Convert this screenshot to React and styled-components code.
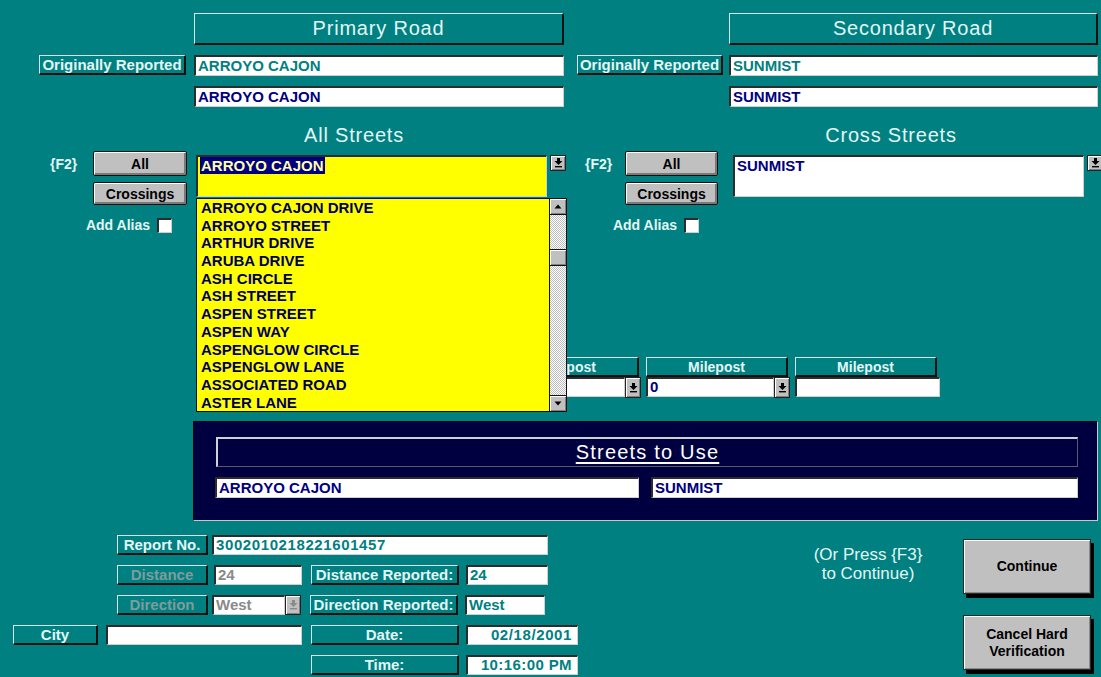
import React from "react";
import styled, { createGlobalStyle, css } from "styled-components";

const TEAL = "#008080";
const INK = "#e2f6f6";

const GlobalStyle = createGlobalStyle`
  html, body {
    margin: 0;
    padding: 0;
    background: ${TEAL};
  }
  body {
    font-family: "Liberation Sans", Arial, sans-serif;
  }
  * {
    box-sizing: border-box;
  }
`;

const raised = css`
  border-style: solid;
  border-width: 1px 2px 2px 1px;
  border-color: #d4e4e4 #101010 #101010 #d4e4e4;
`;

const sunken = css`
  border-style: solid;
  border-width: 2px 1px 1px 2px;
  border-color: #2c2c2c #cfcfcf #cfcfcf #2c2c2c;
`;

const Screen = styled.div`
  position: relative;
  width: 1101px;
  height: 677px;
  padding-top: 13px;
  overflow: hidden;
  background: ${TEAL};
  color: ${INK};
`;

/* ---------- road headers ---------- */

const RoadRow = styled.div`
  display: flex;
`;

const RoadPanel = styled.div`
  display: grid;
  grid-template-columns: ${({ $labelW }) => $labelW}px ${({ $fieldW }) => $fieldW}px;
  grid-template-rows: 32px 21px 21px;
  column-gap: ${({ $gap }) => $gap}px;
  row-gap: 10px;
  margin-left: ${({ $offset }) => $offset}px;
`;

const RoadTitle = styled.div`
  grid-column: 2;
  ${raised};
  display: flex;
  align-items: center;
  justify-content: center;
  font-size: 20px;
  letter-spacing: 0.8px;
  color: ${INK};
`;

const Tag = styled.div`
  ${raised};
  flex: none;
  width: ${({ $w }) => ($w ? `${$w}px` : "auto")};
  height: 20px;
  margin-left: ${({ $ml }) => $ml || 0}px;
  display: flex;
  align-items: center;
  justify-content: center;
  font-size: ${({ $size }) => $size || 15}px;
  font-weight: bold;
  white-space: nowrap;
  color: ${({ $muted }) => ($muted ? "#7f9c9c" : INK)};
`;

const Field = styled.div`
  ${sunken};
  flex: none;
  width: ${({ $w }) => ($w ? `${$w}px` : "auto")};
  height: ${({ $h }) => $h || 21}px;
  margin-left: ${({ $ml }) => $ml || 0}px;
  padding: 0 ${({ $pad }) => $pad ?? 2}px;
  background: #fff;
  font-size: 15px;
  font-weight: bold;
  line-height: ${({ $h }) => ($h || 21) - 4}px;
  letter-spacing: ${({ $track }) => $track || 0}px;
  text-align: ${({ $align }) => $align || "left"};
  white-space: nowrap;
  overflow: hidden;
  color: ${({ $color }) => $color || "#000080"};
`;

/* ---------- street pickers ---------- */

const Middle = styled.section`
  position: relative;
  margin-top: 16px;
`;

const PickerRow = styled.div`
  display: flex;
  height: 110px;
`;

const Picker = styled.div`
  display: flex;
  margin-left: ${({ $offset }) => $offset}px;
`;

const Controls = styled.div`
  width: ${({ $w }) => $w}px;
  margin-top: 28px;
  display: flex;
  flex-direction: column;
  align-items: flex-end;
`;

const KeyRow = styled.div`
  width: 100%;
  display: flex;
  align-items: center;
  justify-content: space-between;
`;

const KeyHint = styled.span`
  font-size: 14px;
  font-weight: bold;
  color: ${INK};
`;

const GreyButton = styled.button`
  width: ${({ $w }) => $w}px;
  height: 25px;
  margin-top: ${({ $mt }) => $mt || 0}px;
  padding: 0;
  border: 1px solid #111;
  border-radius: 2px;
  background: #c0c0c0;
  box-shadow: inset 1px 1px #fff, inset -2px -2px #7a7a7a;
  font-family: inherit;
  font-size: 14px;
  font-weight: bold;
  color: #000;
`;

const AliasRow = styled.label`
  display: flex;
  align-items: center;
  gap: 7px;
  margin-top: 12px;
  margin-right: ${({ $mr }) => $mr}px;
  font-size: 14px;
  font-weight: bold;
  color: ${INK};
`;

const Check = styled.span`
  ${sunken};
  width: 15px;
  height: 15px;
  background: #fff;
`;

const ComboCol = styled.div`
  width: 370px;
  flex: none;
  margin-left: ${({ $ml }) => $ml}px;
`;

const PickerTitle = styled.div`
  width: 316px;
  height: 24px;
  font-size: 20px;
  line-height: 24px;
  letter-spacing: 0.8px;
  text-align: center;
  color: ${INK};
`;

const ComboRow = styled.div`
  display: flex;
  align-items: flex-start;
  gap: 3px;
  margin-top: 8px;
`;

const ComboBox = styled.div`
  ${sunken};
  width: 352px;
  height: 42px;
  padding: 1px 2px;
  background: ${({ $bg }) => $bg};
  font-size: 15px;
  font-weight: bold;
  line-height: 16px;
  color: #000080;
`;

const Selected = styled.span`
  background: #000080;
  color: #ffffa8;
  padding: 0 1px;
`;

const DropBtn = styled.span`
  flex: none;
  width: 16px;
  height: ${({ $h }) => $h || 16}px;
  display: flex;
  align-items: center;
  justify-content: center;
  border: 1px solid #222;
  background: #c0c0c0;
  box-shadow: inset 1px 1px #fff, inset -1px -1px #808080;
`;

const DropList = styled.div`
  position: absolute;
  z-index: 2;
  left: 196px;
  top: 75px;
  width: 371px;
  height: 214px;
  display: flex;
  border: 1px solid #111;
  background: #ffff00;
`;

const ListItems = styled.ul`
  flex: 1;
  margin: 0;
  padding: 0 0 0 4px;
  list-style: none;
`;

const ListItem = styled.li`
  height: 17.7px;
  font-size: 15px;
  font-weight: bold;
  line-height: 18px;
  color: #00005a;
  white-space: nowrap;
`;

const ScrollBar = styled.div`
  width: 17px;
  display: flex;
  flex-direction: column;
  border-left: 1px solid #111;
`;

const ScrollArrow = styled.span`
  height: 16px;
  display: flex;
  align-items: center;
  justify-content: center;
  background: #c0c0c0;
  box-shadow: inset 1px 1px #fff, inset -1px -1px #808080;
  border-${({ $edge }) => $edge}: 1px solid #111;
`;

const ScrollTrack = styled.div`
  flex: 1;
  display: flex;
  flex-direction: column;
  background-color: #fff;
  background-image: repeating-conic-gradient(#bdbdbd 0 25%, #fff 0 50%);
  background-size: 2px 2px;
`;

const ScrollThumb = styled.span`
  height: 17px;
  margin-top: 34px;
  border-top: 1px solid #111;
  border-bottom: 1px solid #111;
  background: #c0c0c0;
  box-shadow: inset 1px 1px #fff, inset -1px -1px #808080;
`;

/* ---------- milepost row ---------- */

const MileRow = styled.div`
  display: flex;
  gap: 3px;
  margin-top: 124px;
  margin-left: 497px;
`;

const MileGroup = styled.div`
  width: 146px;
  display: flex;
  flex-direction: column;
`;

const MileInputs = styled.div`
  display: flex;
`;

/* ---------- streets to use ---------- */

const UsePanel = styled.section`
  width: 905px;
  height: 100px;
  margin: 23px 0 0 193px;
  padding: 15px 19px 0 22px;
  background: #000040;
  border-style: solid;
  border-width: 1px;
  border-color: #000 #c8c8c8 #c8c8c8 #000;
`;

const UseHeader = styled.div`
  height: 30px;
  display: flex;
  align-items: center;
  justify-content: center;
  border-style: solid;
  border-width: 2px 1px 1px 2px;
  border-color: #d0d0d0 #5a5a6a #5a5a6a #d0d0d0;
  font-size: 20px;
  letter-spacing: 1.2px;
  text-decoration: underline;
  text-underline-offset: 3px;
  color: #fff;
`;

const UseFields = styled.div`
  display: flex;
  gap: 12px;
  margin: 10px 0 0 -1px;
`;

/* ---------- bottom form ---------- */

const Bottom = styled.section`
  display: flex;
  margin-top: 14px;
`;

const Form = styled.div`
  width: 578px;
  display: flex;
  flex-direction: column;
  gap: 10px;
`;

const FormRow = styled.div`
  height: 20px;
  display: flex;
  align-items: center;
  padding-left: ${({ $pl }) => $pl}px;
`;

const Note = styled.p`
  width: 160px;
  margin: 10px 0 0 210px;
  font-size: 17px;
  line-height: 19px;
  text-align: center;
  color: ${INK};
`;

const Actions = styled.div`
  display: flex;
  flex-direction: column;
  gap: 21px;
  margin: 4px 0 0 15px;
`;

const BigButton = styled.button`
  width: 128px;
  height: 55px;
  padding: 0;
  border: 1px solid #2a2a2a;
  background: #c0c0c0;
  box-shadow: inset 1px 1px #fff, inset -1px -1px #8a8a8a, 3px 4px 0 #000;
  font-family: inherit;
  font-size: 14px;
  font-weight: bold;
  line-height: 17px;
  color: #000;
`;

/* ---------- glyphs ---------- */

const DownBar = ({ color = "#000" }) => (
  <svg width="9" height="10" viewBox="0 0 9 10">
    <path d="M3 0h3v3h2.5L4.5 7 0.5 3H3z" fill={color} />
    <rect x="1" y="8" width="7" height="1.4" fill={color} />
  </svg>
);

const Arrow = ({ up }) => (
  <svg width="8" height="5" viewBox="0 0 8 5">
    <path d={up ? "M4 0.5L7.5 4.5H0.5z" : "M0.5 0.5H7.5L4 4.5z"} fill="#000" />
  </svg>
);

const streets = [
  "ARROYO CAJON DRIVE",
  "ARROYO STREET",
  "ARTHUR DRIVE",
  "ARUBA DRIVE",
  "ASH CIRCLE",
  "ASH STREET",
  "ASPEN STREET",
  "ASPEN WAY",
  "ASPENGLOW CIRCLE",
  "ASPENGLOW LANE",
  "ASSOCIATED ROAD",
  "ASTER LANE",
];

export default function App() {
  return (
    <Screen>
      <GlobalStyle />

      <RoadRow>
        <RoadPanel $offset={39} $labelW={147} $fieldW={370} $gap={8}>
          <RoadTitle>Primary Road</RoadTitle>
          <Tag>Originally Reported</Tag>
          <Field $color={TEAL}>ARROYO CAJON</Field>
          <span />
          <Field>ARROYO CAJON</Field>
        </RoadPanel>
        <RoadPanel $offset={13} $labelW={146} $fieldW={369} $gap={6}>
          <RoadTitle>Secondary Road</RoadTitle>
          <Tag>Originally Reported</Tag>
          <Field $color={TEAL}>SUNMIST</Field>
          <span />
          <Field>SUNMIST</Field>
        </RoadPanel>
      </RoadRow>

      <Middle>
        <PickerRow>
          <Picker $offset={50}>
            <Controls $w={137}>
              <KeyRow>
                <KeyHint>{"{F2}"}</KeyHint>
                <GreyButton $w={94}>All</GreyButton>
              </KeyRow>
              <GreyButton $w={94} $mt={6}>Crossings</GreyButton>
              <AliasRow $mr={15}>
                Add Alias <Check />
              </AliasRow>
            </Controls>
            <ComboCol $ml={9}>
              <PickerTitle>All Streets</PickerTitle>
              <ComboRow>
                <ComboBox $bg="#ffff00">
                  <Selected>ARROYO CAJON</Selected>
                </ComboBox>
                <DropBtn>
                  <DownBar />
                </DropBtn>
              </ComboRow>
            </ComboCol>
          </Picker>

          <Picker $offset={19}>
            <Controls $w={133}>
              <KeyRow>
                <KeyHint>{"{F2}"}</KeyHint>
                <GreyButton $w={93}>All</GreyButton>
              </KeyRow>
              <GreyButton $w={93} $mt={6}>Crossings</GreyButton>
              <AliasRow $mr={19}>
                Add Alias <Check />
              </AliasRow>
            </Controls>
            <ComboCol $ml={15}>
              <PickerTitle>Cross Streets</PickerTitle>
              <ComboRow>
                <ComboBox $bg="#fff">SUNMIST</ComboBox>
                <DropBtn>
                  <DownBar />
                </DropBtn>
              </ComboRow>
            </ComboCol>
          </Picker>
        </PickerRow>

        <DropList>
          <ListItems>
            {streets.map((name) => (
              <ListItem key={name}>{name}</ListItem>
            ))}
          </ListItems>
          <ScrollBar>
            <ScrollArrow $edge="bottom">
              <Arrow up />
            </ScrollArrow>
            <ScrollTrack>
              <ScrollThumb />
            </ScrollTrack>
            <ScrollArrow $edge="top">
              <Arrow />
            </ScrollArrow>
          </ScrollBar>
        </DropList>

        <MileRow>
          <MileGroup>
            <Tag $w={142} $size={14}>Milepost</Tag>
            <MileInputs>
              <Field $w={128} $h={20} />
              <DropBtn $h={21}>
                <DownBar />
              </DropBtn>
            </MileInputs>
          </MileGroup>
          <MileGroup>
            <Tag $w={142} $size={14}>Milepost</Tag>
            <MileInputs>
              <Field $w={128} $h={20}>0</Field>
              <DropBtn $h={21}>
                <DownBar />
              </DropBtn>
            </MileInputs>
          </MileGroup>
          <MileGroup>
            <Tag $w={142} $size={14}>Milepost</Tag>
            <MileInputs>
              <Field $w={145} $h={20} />
            </MileInputs>
          </MileGroup>
        </MileRow>
      </Middle>

      <UsePanel>
        <UseHeader>Streets to Use</UseHeader>
        <UseFields>
          <Field $w={424}>ARROYO CAJON</Field>
          <Field $w={427}>SUNMIST</Field>
        </UseFields>
      </UsePanel>

      <Bottom>
        <Form>
          <FormRow $pl={117}>
            <Tag $w={91}>Report No.</Tag>
            <Field $w={336} $h={20} $ml={4} $color={TEAL} $track={0.6}>
              3002010218221601457
            </Field>
          </FormRow>
          <FormRow $pl={117}>
            <Tag $w={91} $muted>
              Distance
            </Tag>
            <Field $w={88} $h={20} $ml={6} $color="#8a8a8a">
              24
            </Field>
            <Tag $w={148} $ml={9}>
              Distance Reported:
            </Tag>
            <Field $w={82} $h={20} $ml={7} $color={TEAL}>
              24
            </Field>
          </FormRow>
          <FormRow $pl={117}>
            <Tag $w={91} $muted>
              Direction
            </Tag>
            <Field $w={73} $h={20} $ml={4} $color="#8a8a8a">
              West
            </Field>
            <DropBtn $h={20}>
              <DownBar color="#8a8a8a" />
            </DropBtn>
            <Tag $w={148} $ml={9}>
              Direction Reported:
            </Tag>
            <Field $w={80} $h={20} $ml={7} $color={TEAL}>
              West
            </Field>
          </FormRow>
          <FormRow $pl={13}>
            <Tag $w={85}>City</Tag>
            <Field $w={196} $h={20} $ml={8} />
            <Tag $w={148} $ml={9}>
              Date:
            </Tag>
            <Field $w={112} $h={20} $ml={7} $pad={5} $align="right" $color={TEAL} $track={0.6}>
              02/18/2001
            </Field>
          </FormRow>
          <FormRow $pl={311}>
            <Tag $w={148}>Time:</Tag>
            <Field $w={112} $h={20} $ml={7} $pad={5} $align="right" $color={TEAL} $track={0.4}>
              10:16:00 PM
            </Field>
          </FormRow>
        </Form>

        <Note>
          (Or Press {"{F3}"}
          <br />
          to Continue)
        </Note>

        <Actions>
          <BigButton>Continue</BigButton>
          <BigButton>
            Cancel Hard
            <br />
            Verification
          </BigButton>
        </Actions>
      </Bottom>
    </Screen>
  );
}
